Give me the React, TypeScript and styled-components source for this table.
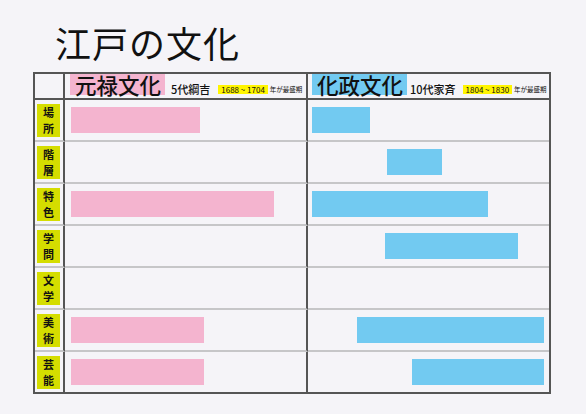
import React from "react";
import styled, { createGlobalStyle } from "styled-components";

const GlobalStyle = createGlobalStyle`
  html, body {
    margin: 0;
    padding: 0;
    background: #f5f4f8;
  }
  body {
    font-family: "Noto Sans CJK JP", "Noto Sans", sans-serif;
    color: #111;
  }
`;

const PINK = "#f4b4cf";
const BLUE = "#72caf1";
const FRAME = "#555555";
const RULE = "#c6c6c8";

const Page = styled.div`
  width: 586px;
  height: 414px;
  box-sizing: border-box;
  padding: 22px 0 0 33px;
`;

const Title = styled.h1`
  margin: 0 0 10px 22px;
  font-size: 36px;
  line-height: 40px;
  height: 40px;
  font-weight: 400;
  letter-spacing: 1px;
`;

const Table = styled.div`
  display: grid;
  grid-template-columns: 30px 243px 241px;
  width: fit-content;
  border: 2px solid ${FRAME};
`;

const Cell = styled.div<{ $last?: boolean; $divider?: boolean }>`
  box-sizing: border-box;
  height: ${(p) => (p.$last ? 40 : 42)}px;
  border-bottom: ${(p) => (p.$last ? "none" : `2px solid ${RULE}`)};
  border-right: ${(p) => (p.$divider ? `2px solid ${FRAME}` : "none")};
  display: flex;
  align-items: center;
`;

const HeadCell = styled.div<{ $divider?: boolean; $pad: number }>`
  box-sizing: border-box;
  height: 26px;
  border-bottom: 2px solid ${FRAME};
  border-right: ${(p) => (p.$divider ? `2px solid ${FRAME}` : "none")};
  display: flex;
  align-items: flex-end;
  padding: 0 0 3px ${(p) => p.$pad}px;
`;

const EraName = styled.span<{ $bg: string }>`
  align-self: flex-start;
  background: ${(p) => p.$bg};
  font-size: 21.5px;
  line-height: 21px;
  height: 21px;
  padding: 0 4px 0 5px;
  font-weight: 500;
`;

const Shogun = styled.span<{ $gap: number }>`
  margin-left: ${(p) => p.$gap}px;
  font-size: 11px;
  line-height: 12px;
  font-weight: 500;
`;

const Years = styled.span<{ $gap: number }>`
  margin-left: ${(p) => p.$gap}px;
  background: #fff500;
  font-size: 8px;
  line-height: 9px;
  height: 9px;
  padding: 0 3px;
  margin-bottom: 1px;
`;

const Peak = styled.span`
  margin-left: 2px;
  font-size: 6.5px;
  line-height: 9px;
  margin-bottom: 1px;
`;

const Label = styled.div`
  width: 23px;
  height: 33px;
  margin-left: 2px;
  background: #d5dd00;
  display: flex;
  flex-direction: column;
  align-items: center;
  justify-content: center;
  font-size: 11px;
  line-height: 16px;
  font-weight: 700;
`;

const Bar = styled.div<{ $color: string }>`
  height: 26px;
  background: ${(p) => p.$color};
`;

type Span = [number, number] | null;

const rows: { label: string; genroku: Span; kasei: Span }[] = [
  { label: "場所", genroku: [6, 129], kasei: [4, 58] },
  { label: "階層", genroku: null, kasei: [79, 55] },
  { label: "特色", genroku: [6, 203], kasei: [4, 176] },
  { label: "学問", genroku: null, kasei: [77, 133] },
  { label: "文学", genroku: null, kasei: null },
  { label: "美術", genroku: [6, 133], kasei: [49, 187] },
  { label: "芸能", genroku: [6, 133], kasei: [104, 132] },
];

const BarCell = ({ span, color, last, divider }: { span: Span; color: string; last: boolean; divider?: boolean }) => (
  <Cell $last={last} $divider={divider}>
    {span && <Bar $color={color} style={{ marginLeft: span[0], width: span[1] }} />}
  </Cell>
);

export default function App() {
  return (
    <>
      <GlobalStyle />
      <Page>
        <Title>江戸の文化</Title>
        <Table>
          <HeadCell $divider $pad={0} />
          <HeadCell $divider $pad={5}>
            <EraName $bg={PINK}>元禄文化</EraName>
            <Shogun $gap={6}>5代綱吉</Shogun>
            <Years $gap={8}>1688 ~ 1704</Years>
            <Peak>年が最盛期</Peak>
          </HeadCell>
          <HeadCell $pad={4}>
            <EraName $bg={BLUE}>化政文化</EraName>
            <Shogun $gap={3}>10代家斉</Shogun>
            <Years $gap={7}>1804 ~ 1830</Years>
            <Peak>年が最盛期</Peak>
          </HeadCell>
          {rows.map((r, i) => {
            const last = i === rows.length - 1;
            return (
              <React.Fragment key={r.label}>
                <Cell $last={last} $divider>
                  <Label>
                    <span>{r.label[0]}</span>
                    <span>{r.label[1]}</span>
                  </Label>
                </Cell>
                <BarCell span={r.genroku} color={PINK} last={last} divider />
                <BarCell span={r.kasei} color={BLUE} last={last} />
              </React.Fragment>
            );
          })}
        </Table>
      </Page>
    </>
  );
}
